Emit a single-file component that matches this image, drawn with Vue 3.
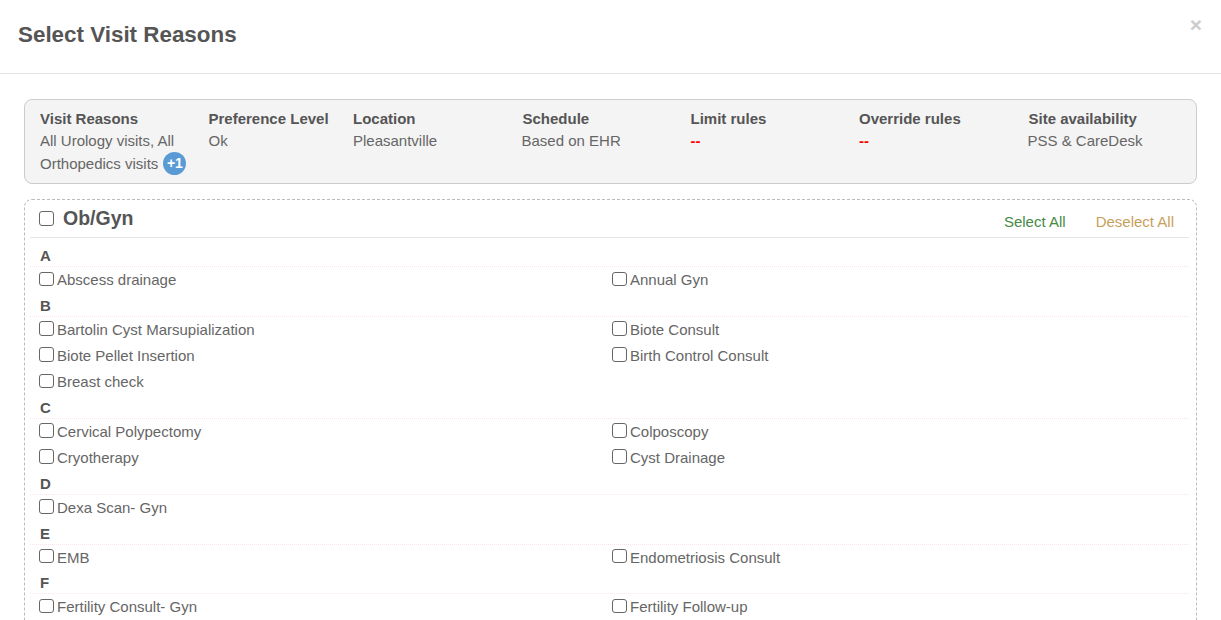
<script setup>
const summary = [
  { h: 'Visit Reasons', v: 'All Urology visits, All Orthopedics visits', badge: '+1' },
  { h: 'Preference Level', v: 'Ok' },
  { h: 'Location', v: 'Pleasantville' },
  { h: 'Schedule', v: 'Based on EHR' },
  { h: 'Limit rules', v: '--', red: true },
  { h: 'Override rules', v: '--', red: true },
  { h: 'Site availability', v: 'PSS & CareDesk' }
]
const groups = [
  { l: 'A', items: ['Abscess drainage', 'Annual Gyn'] },
  { l: 'B', items: ['Bartolin Cyst Marsupialization', 'Biote Consult', 'Biote Pellet Insertion', 'Birth Control Consult', 'Breast check'] },
  { l: 'C', items: ['Cervical Polypectomy', 'Colposcopy', 'Cryotherapy', 'Cyst Drainage'] },
  { l: 'D', items: ['Dexa Scan- Gyn'] },
  { l: 'E', items: ['EMB', 'Endometriosis Consult'] },
  { l: 'F', items: ['Fertility Consult- Gyn', 'Fertility Follow-up'] }
]
</script>

<template>
  <div class="modal">
    <header class="head">
      <h1>Select Visit Reasons</h1>
      <span class="close">×</span>
    </header>
    <main class="body">
      <section class="summary">
        <div v-for="s in summary" :key="s.h" class="col">
          <div class="sh">{{ s.h }}</div>
          <div class="sv" :class="{ red: s.red }">{{ s.v }}<span v-if="s.badge" class="badge">{{ s.badge }}</span></div>
        </div>
      </section>
      <section class="panel">
        <div class="phead">
          <input type="checkbox" class="cb top" />
          <span class="spec">Ob/Gyn</span>
          <a class="sel">Select All</a>
          <a class="desel">Deselect All</a>
        </div>
        <div class="letters">
          <div v-for="g in groups" :key="g.l">
            <div class="letter">{{ g.l }}</div>
            <div class="grid">
              <label v-for="i in g.items" :key="i" class="item"><input type="checkbox" class="cb" />{{ i }}</label>
            </div>
          </div>
        </div>
      </section>
    </main>
  </div>
</template>

<style>
html, body { margin: 0; height: 620px; overflow: hidden; background: #fff; }
</style>

<style scoped>
.modal { width: 1221px; height: 620px; overflow: hidden; font-family: "Liberation Sans", Arial, sans-serif; color: #666; font-size: 15px; }
.head { height: 69px; border-bottom: 1px solid #e5e5e5; position: relative; padding: 0 18px 4px; display: flex; align-items: center; }
h1 { margin: 0; font-size: 22.4px; font-weight: 700; color: #555; }
.close { position: absolute; right: 19px; top: 13px; font-size: 21px; font-weight: 700; line-height: 24px; color: #ccc; }
.body { padding: 25px 24px 0; }
.summary { height: 85px; box-sizing: border-box; border: 1px solid #ccc; border-radius: 8px; background: #f4f4f4; padding: 8px 15px; display: grid; grid-template-columns: 168.5px 144.5px 169.5px 168px 168.5px 169.5px 1fr; }
.sh { font-weight: 700; line-height: 21px; color: #555; }
.sv { line-height: 23px; }
.sv.red { color: #f00; font-weight: 700; }
.col:first-child .sv { width: 150px; }
.col:nth-child(4) .sv, .col:nth-child(7) .sv { margin-left: -1px; }
.badge { display: inline-block; width: 23px; height: 23px; border-radius: 50%; background: #5b9bd5; color: #fff; font-weight: 700; font-size: 14px; line-height: 23px; text-align: center; margin-left: 5px; vertical-align: top; }
.panel { margin-top: 15px; border: 1px dashed #bbb; border-radius: 8px; padding: 0 7px 40px 15px; }
.phead { height: 37px; margin-left: -10px; padding-left: 10px; display: flex; align-items: center; border-bottom: 1px solid #e5e5e5; }
.spec { font-size: 19.5px; font-weight: 700; color: #555; margin-left: 9px; }
.sel { margin-left: auto; color: #458a45; position: relative; top: 3px; }
.desel { margin-left: 30px; margin-right: 15px; color: #c79f5c; position: relative; top: 3px; }
.letters { padding-top: 5.8px; }
.letter { height: 23.5px; box-sizing: border-box; padding-top: 3.6px; line-height: 17px; font-weight: 700; color: #555; border-bottom: 1px dotted #fbe3ea; margin-left: -10px; padding-left: 10px; }
.grid { display: grid; grid-template-columns: 573px 1fr; }
.item { display: flex; align-items: center; box-sizing: border-box; height: 26.2px; padding-bottom: 1.2px; }
.cb { appearance: none; box-sizing: border-box; width: 14.5px; height: 14.5px; margin: 0 3.5px 2px -1px; border: 1px solid #666; border-radius: 3px; background: #fff; flex: none; }
.cb.top { margin: 0 0 0 -1px; width: 15px; height: 15px; }
</style>
